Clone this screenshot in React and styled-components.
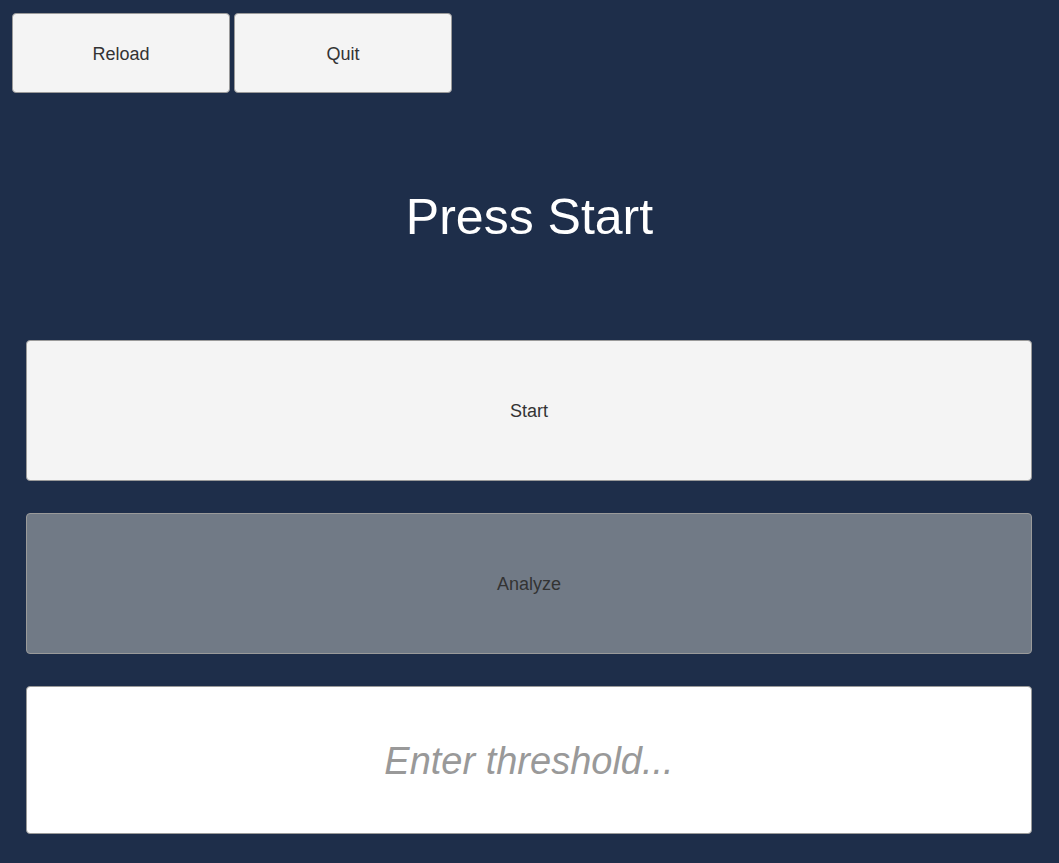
import React from 'react';
import styled, { createGlobalStyle } from 'styled-components';

const GlobalStyle = createGlobalStyle`
  html, body {
    margin: 0;
    padding: 0;
    background: #1e2e4a;
    font-family: "Liberation Sans", Arial, sans-serif;
  }
`;

const Page = styled.div`
  min-height: 863px;
  background: #1e2e4a;
`;

const TopBar = styled.div`
  display: flex;
  gap: 4px;
  padding: 13px 0 0 12px;
`;

const Button = styled.button`
  box-sizing: border-box;
  display: flex;
  align-items: center;
  justify-content: center;
  border: 1px solid #9a9a9a;
  border-radius: 4px;
  background: ${(p) => (p.$disabled ? '#717a86' : '#f4f4f4')};
  color: #333333;
  font-family: "Liberation Sans", Arial, sans-serif;
  font-size: 18px;
  padding: 2px 0 0;
  cursor: pointer;
`;

const SmallButton = styled(Button)`
  width: 218px;
  height: 80px;
`;

const WideButton = styled(Button)`
  width: 100%;
  height: 141px;
`;

const Title = styled.div`
  height: 247px;
  display: flex;
  align-items: center;
  justify-content: center;
  color: #ffffff;
  font-size: 50px;
`;

const Panel = styled.div`
  display: flex;
  flex-direction: column;
  gap: 32px;
  padding: 0 27px 0 26px;
`;

const Input = styled.input`
  box-sizing: border-box;
  width: 100%;
  height: 148px;
  border: 1px solid #9a9a9a;
  border-radius: 4px;
  background: #ffffff;
  text-align: center;
  font-family: "Liberation Sans", Arial, sans-serif;
  font-size: 38px;
  color: #333;
  padding-top: 4px;
  outline: none;

  &::placeholder {
    color: #999999;
    font-style: italic;
  }
`;

export default function App() {
  return (
    <Page>
      <GlobalStyle />
      <TopBar>
        <SmallButton>Reload</SmallButton>
        <SmallButton>Quit</SmallButton>
      </TopBar>
      <Title>Press Start</Title>
      <Panel>
        <WideButton>Start</WideButton>
        <WideButton $disabled>Analyze</WideButton>
        <Input placeholder="Enter threshold..." />
      </Panel>
    </Page>
  );
}
